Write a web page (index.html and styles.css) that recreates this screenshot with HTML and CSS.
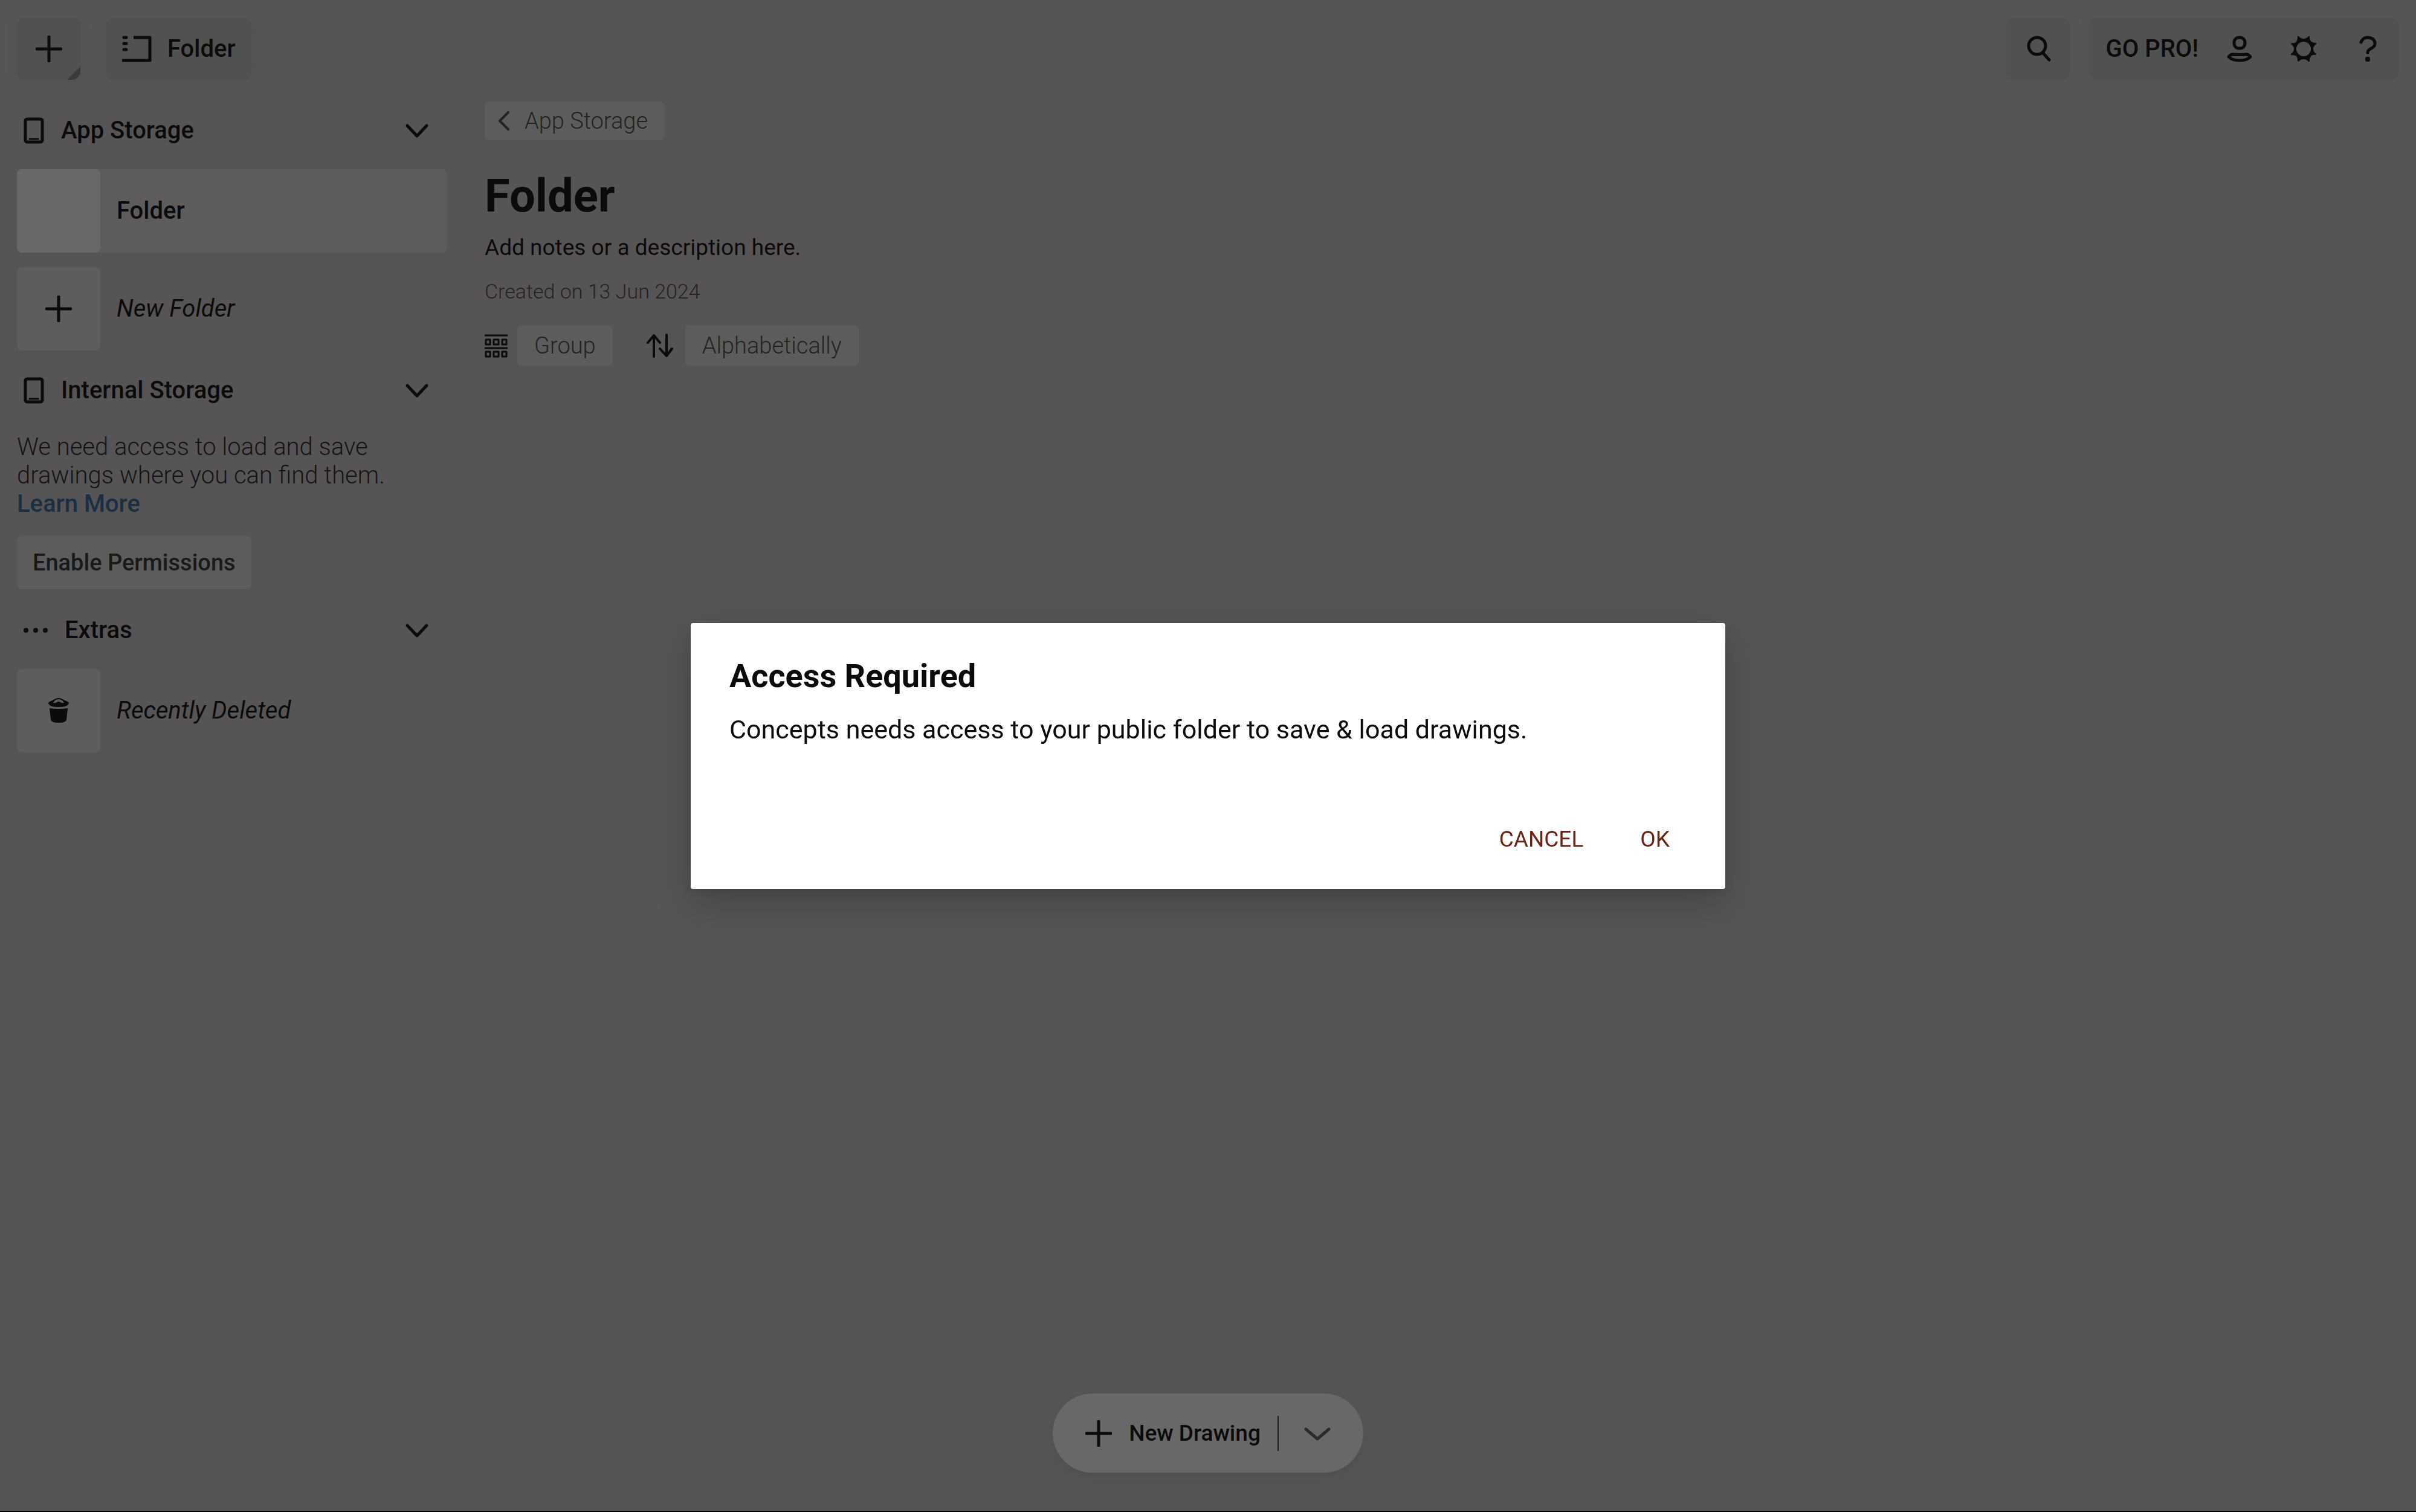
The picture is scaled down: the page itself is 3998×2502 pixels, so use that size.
FILE: index.html
```html
<!DOCTYPE html>
<html lang="en">
<head>
  <meta charset="UTF-8">
  <meta name="viewport" content="width=device-width, initial-scale=1.0">
  <title>Folder</title>
  <link rel="stylesheet" href="styles.css">
</head>
<body>
  <div class="app">
    <!-- Toolbar -->
    <header class="toolbar">
      <button class="tool tool-add" aria-label="Add">
        <svg class="icon" viewBox="0 0 44 44"><path d="M22 2V42M2 22H42"/></svg>
      </button>
      <button class="tool tool-tab">
        <svg class="icon icon-wide" viewBox="0 0 50 44"><path d="M20 3H47V41H1"/><path class="dashes" d="M4 3H8M4 13H8M4 23H8"/></svg>
        Folder
      </button>
      <div class="toolbar-right">
        <button class="tool" aria-label="Search">
          <svg class="icon" viewBox="0 0 44 44"><circle cx="19" cy="17" r="14"/><path d="M28 28L39 40"/></svg>
        </button>
        <div class="tool-group">
          <button class="plain">GO PRO!</button>
          <button class="plain" aria-label="Account">
            <svg class="icon" viewBox="0 0 44 44"><rect x="13" y="3" width="18" height="18" rx="8"/><path d="M11 31Q22 32 33 31Q37 31 40 35Q34 41 22 41T4 35Q7 31 11 31Z"/></svg>
          </button>
          <button class="plain" aria-label="Settings">
            <svg class="icon" viewBox="0 0 44 44"><path class="solid" fill-rule="evenodd" d="M14 1Q17 5 22 5T30 1L32 1Q32 8 35 10T43 12L43 14Q38 17 38 22T43 30L42 32Q36 31 34 34T32 43L30 43Q27 39 22 39T14 43L12 42Q12 36 10 34T1 32L1 30Q6 27 6 22T1 14L2 12Q8 13 10 10T12 1ZM22 10A12 12 0 1 0 22 34A12 12 0 1 0 22 10Z"/></svg>
          </button>
          <button class="plain" aria-label="Help">
            <svg class="icon" viewBox="0 0 44 44"><path d="M11 11Q14 3 22 3Q34 4 34 13Q34 18 28 21Q22 24 22 28"/><rect class="solid" x="18" y="35" width="8" height="8" rx="3"/></svg>
          </button>
        </div>
      </div>
    </header>

    <div class="columns">
      <!-- Sidebar -->
      <nav class="sidebar">
        <button class="section">
          <svg class="icon icon-phone" viewBox="0 0 34 44"><rect x="3" y="3" width="28" height="38" rx="3"/><path class="thin" d="M10 36H24"/></svg>
          App Storage
          <svg class="icon chevron" viewBox="0 0 44 44"><path d="M6 14L22 31L38 14"/></svg>
        </button>
        <a class="row selected" href="#">
          <span class="tile"></span>
          Folder
        </a>
        <a class="row" href="#">
          <span class="tile"><svg class="icon" viewBox="0 0 44 44"><path d="M22 2V42M2 22H42"/></svg></span>
          New Folder
        </a>

        <button class="section">
          <svg class="icon icon-phone" viewBox="0 0 34 44"><rect x="3" y="3" width="28" height="38" rx="3"/><path class="thin" d="M10 36H24"/></svg>
          Internal Storage
          <svg class="icon chevron" viewBox="0 0 44 44"><path d="M6 14L22 31L38 14"/></svg>
        </button>
        <p class="notice">We need access to load and save drawings where you can find them. <a class="learn" href="#">Learn More</a></p>
        <button class="enable">Enable Permissions</button>

        <button class="section">
          <svg class="icon icon-dots" viewBox="0 0 40 44"><circle class="solid" cx="4" cy="22" r="4"/><circle class="solid" cx="20" cy="22" r="4"/><circle class="solid" cx="36" cy="22" r="4"/></svg>
          Extras
          <svg class="icon chevron" viewBox="0 0 44 44"><path d="M6 14L22 31L38 14"/></svg>
        </button>
        <a class="row" href="#">
          <span class="tile"><svg class="icon" viewBox="0 0 44 44"><path class="solid" d="M7 18Q22 20 37 18L35 37Q34 42 22 42T9 37Z"/><path class="solid" fill-rule="evenodd" d="M5 9Q6 7 12 5Q18 1 22 1T32 5Q38 7 39 9Q38 16 22 16T5 9ZM13 9Q17 10 19 8Q22 6 25 8Q27 10 31 9Q28 3 22 3T13 9Z"/></svg></span>
          Recently Deleted
        </a>
      </nav>

      <!-- Folder content -->
      <main class="content">
        <a class="chip back" href="#">
          <svg class="icon icon-back" viewBox="0 0 24 36"><path d="M19 4L5 18L19 32"/></svg>
          App Storage
        </a>
        <h1>Folder</h1>
        <p class="description">Add notes or a description here.</p>
        <p class="created">Created on 13 Jun 2024</p>
        <div class="options">
          <svg class="icon icon-group" viewBox="0 0 38 40"><path class="thin" d="M1 3H37M2 10H9V18H2ZM15 10H23V18H15ZM29 10H36V18H29ZM1 24H37M2 30H9V38H2ZM15 30H23V38H15ZM29 30H36V38H29Z"/></svg>
          <button class="chip">Group</button>
          <svg class="icon icon-sort" viewBox="0 0 44 40"><path class="line" d="M12 38V3M2 15L12 3L22 15M33 2V37M22 25L33 37L42 25"/></svg>
          <button class="chip">Alphabetically</button>
        </div>
      </main>
    </div>

    <footer class="footer">
      <div class="new-drawing">
        <button class="plain new-main">
          <svg class="icon" viewBox="0 0 44 44"><path d="M22 2V42M2 22H42"/></svg>
          New Drawing
        </button>
        <button class="plain new-more" aria-label="More options">
          <svg class="icon" viewBox="0 0 44 44"><path d="M3 15L22 31L41 15"/></svg>
        </button>
      </div>
    </footer>
  </div>

  <!-- Permission dialog -->
  <div class="overlay">
    <section class="dialog" role="dialog" aria-modal="true" aria-labelledby="dialogTitle">
      <h2 id="dialogTitle">Access Required</h2>
      <p>Concepts needs access to your public folder to save &amp; load drawings.</p>
      <div class="actions">
        <button>CANCEL</button>
        <button>OK</button>
      </div>
    </section>
  </div>
</body>
</html>
```

FILE: styles.css
```css
* {
  box-sizing: border-box;
}
body {
  margin: 0;
  background-color: #575455;
  color: #0b0b0c;
  font-family: Roboto, sans-serif;
  font-size: 40px;
  line-height: 48px;
}
h1, h2, p {
  margin: 0;
}
a {
  color: inherit;
  text-decoration: none;
}
button {
  padding: 0;
  border: none;
  background: none;
  color: inherit;
  font: inherit;
  cursor: pointer;
}
.app {
  display: flex;
  flex-direction: column;
  min-height: 100vh;
  border-bottom: 2px solid #000;
}

/* Icons */
.icon {
  flex: none;
  width: 44px;
  height: 44px;
  fill: none;
  stroke: currentColor;
  stroke-width: 5;
  stroke-linecap: round;
  stroke-linejoin: round;
}
.icon .solid {
  fill: currentColor;
  stroke: none;
}
.icon .thin {
  stroke-width: 3;
}
.icon .line {
  stroke-width: 4;
}
.icon-wide {
  width: 50px;
  stroke-linecap: butt;
}
.icon-wide .dashes {
  stroke-linecap: round;
}
.icon-phone {
  width: 34px;
}
.icon-dots {
  width: 40px;
}
.icon-back {
  width: 24px;
  height: 36px;
  stroke-width: 4;
}
.icon-group {
  width: 38px;
  height: 40px;
}
.icon-sort {
  height: 40px;
}

/* Toolbar */
.toolbar {
  display: flex;
  gap: 42px;
  padding: 30px 28px 0;
  font-weight: 500;
}
.toolbar-right {
  display: flex;
  gap: 32px;
  margin-left: auto;
}
.tool, .tool-group {
  display: flex;
  align-items: center;
  justify-content: center;
  min-width: 105px;
  height: 102px;
  border-radius: 14px;
  background-color: #505251;
  box-shadow: 0 0 12px #525453;
}
.tool-add {
  position: relative;
  overflow: hidden;
}
.tool-add::after {
  content: "";
  position: absolute;
  right: 0;
  bottom: 0;
  border-left: 22px solid transparent;
  border-bottom: 22px solid #3c3b3c;
}
.tool-tab {
  gap: 26px;
  padding: 0 26px;
}
.tool-group {
  gap: 62px;
  padding: 0 30px 0 26px;
}
.tool-group .plain:first-child {
  margin-right: -16px;
}
.plain {
  display: flex;
  align-items: center;
}

/* Sidebar */
.columns {
  display: flex;
  flex: 1;
  gap: 62px;
  padding: 0 28px;
}
.sidebar {
  display: flex;
  flex-direction: column;
  flex: none;
  width: 712px;
  padding-top: 36px;
}
.section {
  display: flex;
  align-items: center;
  gap: 28px;
  height: 96px;
  padding: 0 28px 0 11px;
  font-weight: 500;
}
.chevron {
  margin-left: auto;
}
.row {
  display: flex;
  align-items: center;
  gap: 27px;
  height: 138px;
  margin: 16px 0 8px;
  border-radius: 8px;
  font-style: italic;
}
.row + .section {
  margin-top: 10px;
}
.selected {
  background-color: #5d5b5c;
  font-style: normal;
  font-weight: 500;
}
.tile {
  display: flex;
  align-items: center;
  justify-content: center;
  width: 138px;
  height: 138px;
  border-radius: 8px;
  background-color: #5e5d5d;
}
.selected .tile {
  background-color: #696869;
}
.notice {
  margin-top: 22px;
  color: #151415;
  font-weight: 300;
  line-height: 47px;
}
.learn {
  display: block;
  color: #1a2f42;
  font-weight: 500;
}
.enable {
  align-self: flex-start;
  height: 88px;
  margin: 30px 0 20px;
  padding: 0 26px;
  border-radius: 8px;
  background-color: #5d5c5c;
  color: #1a191a;
  font-size: 38px;
  font-weight: 500;
}

/* Content */
.content {
  flex: 1;
  padding-top: 36px;
}
.chip {
  display: inline-flex;
  align-items: center;
  height: 68px;
  padding: 0 28px;
  border-radius: 8px;
  background-color: #5d5c5c;
  color: #242324;
  font-size: 38px;
  font-weight: 300;
}
.back {
  gap: 22px;
  height: 64px;
  padding-left: 20px;
}
h1 {
  margin-top: 44px;
  font-size: 76px;
  line-height: 96px;
}
.description {
  margin-top: 14px;
  font-size: 37px;
}
.created {
  margin-top: 24px;
  color: #242324;
  font-size: 34px;
  font-weight: 300;
}
.options {
  display: flex;
  align-items: center;
  gap: 16px;
  margin-top: 32px;
}
.icon-sort {
  margin: 0 4px 0 40px;
}

/* New drawing button */
.footer {
  display: flex;
  justify-content: center;
  padding-bottom: 63px;
}
.new-drawing {
  display: flex;
  align-items: center;
  height: 131px;
  padding: 0 54px;
  border-radius: 66px;
  background-color: #696869;
  box-shadow: 0 6px 16px rgba(0, 0, 0, 0.08);
  font-size: 37px;
  font-weight: 500;
}
.new-main {
  gap: 28px;
  padding-right: 28px;
}
.new-more {
  height: 58px;
  padding-left: 42px;
  border-left: 2px solid #1c1b1c;
  color: #2c2b2c;
}

/* Dialog */
.overlay {
  position: fixed;
  inset: 0;
  display: flex;
  align-items: center;
  justify-content: center;
}
.dialog {
  width: 1712px;
  max-width: 90%;
  padding: 56px 64px 34px;
  border-radius: 4px;
  background-color: #fff;
  box-shadow: 0 24px 60px rgba(0, 0, 0, 0.2), 0 4px 16px rgba(0, 0, 0, 0.1);
}
.dialog h2 {
  font-size: 54px;
  font-weight: 700;
  line-height: 64px;
}
.dialog p {
  margin-top: 32px;
  font-size: 43px;
}
.actions {
  display: flex;
  justify-content: flex-end;
  gap: 38px;
  margin-top: 110px;
}
.actions button {
  height: 96px;
  padding: 0 28px;
  color: #6b2413;
  font-size: 37px;
}
```
